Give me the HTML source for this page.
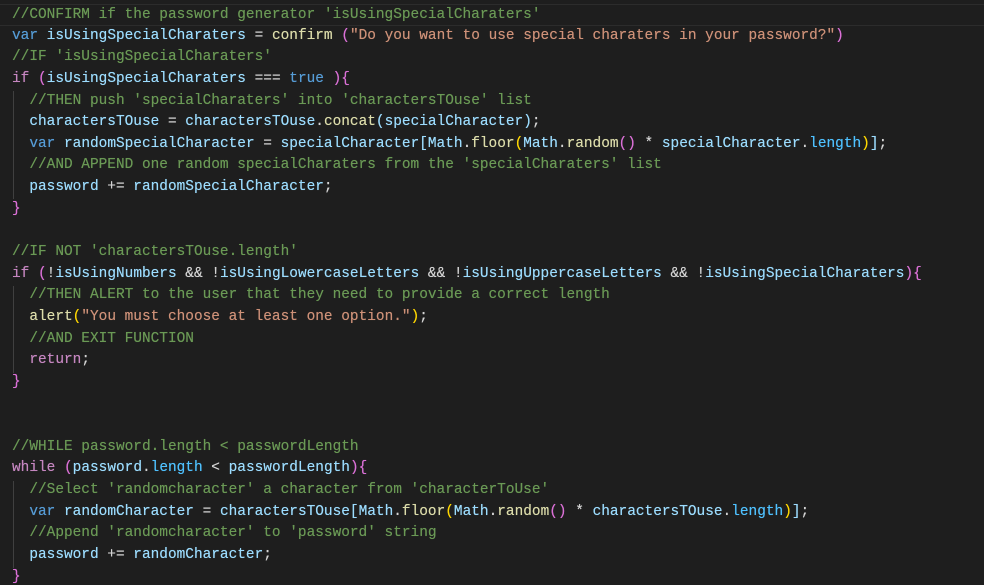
<!DOCTYPE html>
<html><head><meta charset="utf-8"><style>
html,body{margin:0;padding:0;background:#1e1e1e;width:984px;height:585px;overflow:hidden}
#c{position:relative;padding-top:4px;font-family:"Liberation Mono",monospace;font-size:14.45px;color:#d4d4d4}
.l{height:21.65px;line-height:21.65px;padding-left:12px;white-space:pre;position:relative;text-shadow:0 0 0.4px currentColor}
.cur{border-top:1px solid #2c2c2c;border-bottom:1px solid #2c2c2c;box-sizing:border-box}
.g{position:absolute;left:13px;width:1px;background:#404040}
.c{color:#6a9955}.k{color:#569cd6}.v{color:#9cdcfe}.f{color:#dcdcaa}.s{color:#ce9178}.x{color:#c586c0}.p{color:#da70d6}.y{color:#ffd700}.b{color:#179fff}.n{color:#4fc1ff}
</style></head><body><div id="c">
<div class="g" style="top:91px;height:108px"></div>
<div class="g" style="top:286px;height:87px"></div>
<div class="g" style="top:481px;height:87px"></div>
<div class="l cur"><span class="c">//CONFIRM if the password generator 'isUsingSpecialCharaters'</span></div>
<div class="l"><span class="k">var</span> <span class="v">isUsingSpecialCharaters</span> = <span class="f">confirm</span> <span class="p">(</span><span class="s">"Do you want to use special charaters in your password?"</span><span class="p">)</span></div>
<div class="l"><span class="c">//IF 'isUsingSpecialCharaters'</span></div>
<div class="l"><span class="x">if</span> <span class="p">(</span><span class="v">isUsingSpecialCharaters</span> === <span class="k">true</span> <span class="p">){</span></div>
<div class="l">  <span class="c">//THEN push 'specialCharaters' into 'charactersTOuse' list</span></div>
<div class="l">  <span class="v">charactersTOuse</span> = <span class="v">charactersTOuse</span>.<span class="f">concat</span><span class="v">(specialCharacter)</span>;</div>
<div class="l">  <span class="k">var</span> <span class="v">randomSpecialCharacter</span> = <span class="v">specialCharacter[Math</span>.<span class="f">floor</span><span class="y">(</span><span class="v">Math</span>.<span class="f">random</span><span class="p">()</span> * <span class="v">specialCharacter</span>.<span class="n">length</span><span class="y">)</span><span class="v">]</span>;</div>
<div class="l">  <span class="c">//AND APPEND one random specialCharaters from the 'specialCharaters' list</span></div>
<div class="l">  <span class="v">password</span> += <span class="v">randomSpecialCharacter</span>;</div>
<div class="l"><span class="p">}</span></div>
<div class="l"> </div>
<div class="l"><span class="c">//IF NOT 'charactersTOuse.length'</span></div>
<div class="l"><span class="x">if</span> <span class="p">(</span>!<span class="v">isUsingNumbers</span> &amp;&amp; !<span class="v">isUsingLowercaseLetters</span> &amp;&amp; !<span class="v">isUsingUppercaseLetters</span> &amp;&amp; !<span class="v">isUsingSpecialCharaters</span><span class="p">){</span></div>
<div class="l">  <span class="c">//THEN ALERT to the user that they need to provide a correct length</span></div>
<div class="l">  <span class="f">alert</span><span class="y">(</span><span class="s">"You must choose at least one option."</span><span class="y">)</span>;</div>
<div class="l">  <span class="c">//AND EXIT FUNCTION</span></div>
<div class="l">  <span class="x">return</span>;</div>
<div class="l"><span class="p">}</span></div>
<div class="l"> </div>
<div class="l"> </div>
<div class="l"><span class="c">//WHILE password.length &lt; passwordLength</span></div>
<div class="l"><span class="x">while</span> <span class="p">(</span><span class="v">password</span>.<span class="n">length</span> &lt; <span class="v">passwordLength</span><span class="p">){</span></div>
<div class="l">  <span class="c">//Select 'randomcharacter' a character from 'characterToUse'</span></div>
<div class="l">  <span class="k">var</span> <span class="v">randomCharacter</span> = <span class="v">charactersTOuse[Math</span>.<span class="f">floor</span><span class="y">(</span><span class="v">Math</span>.<span class="f">random</span><span class="p">()</span> * <span class="v">charactersTOuse</span>.<span class="n">length</span><span class="y">)</span><span class="v">]</span>;</div>
<div class="l">  <span class="c">//Append 'randomcharacter' to 'password' string</span></div>
<div class="l">  <span class="v">password</span> += <span class="v">randomCharacter</span>;</div>
<div class="l"><span class="p">}</span></div>
</div></body></html>
